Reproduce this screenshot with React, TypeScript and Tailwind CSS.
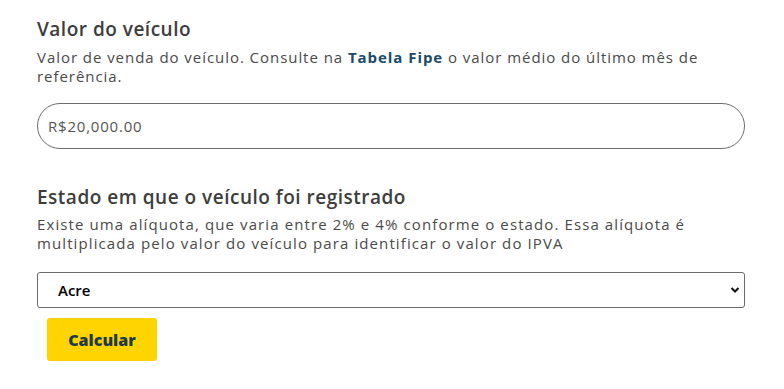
import React, { useState } from 'react';

const states = ['Acre', 'Alagoas', 'Amapá', 'Amazonas', 'Bahia', 'Ceará', 'Distrito Federal'];

export default function App() {
  const [value, setValue] = useState('R$20,000.00');
  const [state, setState] = useState('Acre');

  return (
    <div className="w-[784px] h-[389px] bg-white px-[37px] pt-[16px] text-[#444] font-['Open_Sans',sans-serif]">
      {/* Valor do veículo */}
      <h2 className="text-[19px] leading-[26px] font-semibold tracking-[0.5px] text-[#3d3d3d]">Valor do veículo</h2>
      <p className="mt-[6px] text-[15px] leading-[19px] tracking-[0.95px] text-[#4a4a4a] pr-[30px]">
        Valor de venda do veículo. Consulte na <span className="font-bold text-[#1d4a6b]">Tabela Fipe</span> o
        valor médio do último mês de referência.
      </p>
      <input
        value={value}
        onChange={(e) => setValue(e.target.value)}
        className="mt-[17px] w-[708px] h-[46px] rounded-full border border-[#6b6b6b] px-[10px] text-[15px] tracking-[0.8px] text-[#555] outline-none"
      />

      {/* Estado */}
      <h2 className="mt-[35px] text-[19px] leading-[26px] font-semibold tracking-[0.5px] text-[#3d3d3d]">
        Estado em que o veículo foi registrado
      </h2>
      <p className="mt-[5px] text-[15px] leading-[19px] tracking-[1.1px] text-[#4a4a4a] pr-[20px]">
        Existe uma alíquota, que varia entre 2% e 4% conforme o estado. Essa alíquota é multiplicada pelo valor do
        veículo para identificar o valor do IPVA
      </p>
      <div className="relative mt-[19px] w-[708px]">
        <select
          value={state}
          onChange={(e) => setState(e.target.value)}
          className="w-full h-[36px] appearance-none rounded-[3px] border border-[#6b6b6b] bg-white pl-[20px] text-[15px] font-semibold text-black outline-none"
        >
          {states.map((s) => (
            <option key={s}>{s}</option>
          ))}
        </select>
        <svg
          className="pointer-events-none absolute right-[5px] top-[13px] w-[10px] h-[10px]"
          viewBox="0 0 10 10"
          fill="none"
          stroke="#111"
          strokeWidth="2"
        >
          <path d="M1.5 3 5 6.5 8.5 3" />
        </svg>
      </div>
      <button className="mt-[10px] ml-[10px] w-[110px] h-[43px] rounded-[3px] bg-[#ffd400] text-[16px] font-extrabold text-[#1f3a4a]">
        Calcular
      </button>
    </div>
  );
}
